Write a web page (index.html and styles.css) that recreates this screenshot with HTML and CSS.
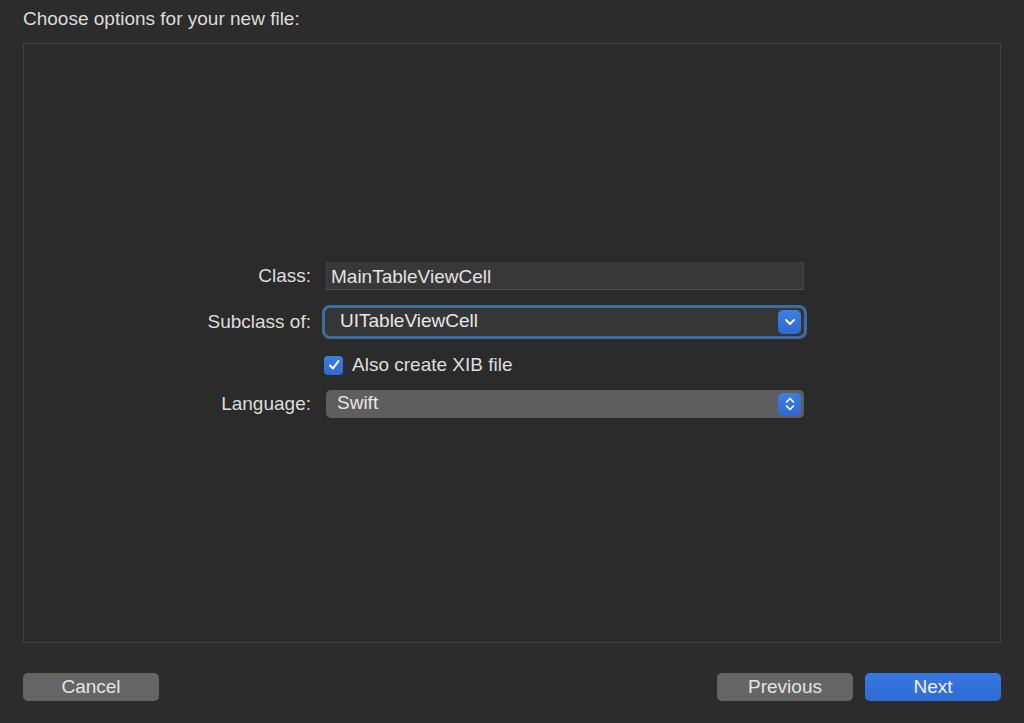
FILE: index.html
```html
<!DOCTYPE html>
<html>
<head>
<meta charset="utf-8">
<link rel="stylesheet" href="styles.css">
</head>
<body>
<div class="dialog">
  <div class="title">Choose options for your new file:</div>
  <div class="panel">
    <div class="form">
      <label class="lbl row1">Class:</label>
      <div class="field row1">MainTableViewCell</div>

      <label class="lbl row2">Subclass of:</label>
      <div class="focus row2">
        <div class="popup dark">
          <span class="ptext">UITableViewCell</span>
          <span class="pbtn">
            <svg width="12" height="8" viewBox="0 0 12 8"><path d="M2 2 L6 6 L10 2" fill="none" stroke="#fff" stroke-width="1.8" stroke-linecap="round" stroke-linejoin="round"/></svg>
          </span>
        </div>
      </div>

      <div class="row3 spacer"></div>
      <div class="check row3">
        <span class="box">
          <svg width="14" height="14" viewBox="0 0 14 14"><path d="M3 7.5 L6 10.5 L11.5 3" fill="none" stroke="#fff" stroke-width="2" stroke-linecap="round" stroke-linejoin="round"/></svg>
        </span>
        <span>Also create XIB file</span>
      </div>

      <label class="lbl row4">Language:</label>
      <div class="popup light row4">
        <span class="ptext">Swift</span>
        <span class="pbtn">
          <svg width="12" height="18" viewBox="0 0 12 18"><path d="M2.5 7 L6 3.5 L9.5 7 M2.5 11 L6 14.5 L9.5 11" fill="none" stroke="#fff" stroke-width="1.7" stroke-linecap="round" stroke-linejoin="round"/></svg>
        </span>
      </div>
    </div>
  </div>
  <div class="footer">
    <button class="btn gray">Cancel</button>
    <div class="right">
      <button class="btn gray">Previous</button>
      <button class="btn blue">Next</button>
    </div>
  </div>
</div>
</body>
</html>
```
FILE: styles.css
```css
html, body {
  margin: 0;
  padding: 0;
  background: #2c2c2c;
}
body {
  width: 1024px;
  height: 723px;
  overflow: hidden;
  font-family: "Liberation Sans", Arial, sans-serif;
  font-size: 19px;
  color: #dedede;
}
.dialog {
  display: flex;
  flex-direction: column;
  padding: 0 23px;
  height: 723px;
}
.title {
  height: 43px;
  line-height: 38px;
  color: #dcdcdc;
}
.panel {
  box-sizing: border-box;
  height: 600px;
  border: 1px solid #424242;
  background: #2b2b2b;
  padding-top: 218px;
}
.form {
  display: grid;
  grid-template-columns: 287px 478px;
  column-gap: 15px;
  align-items: center;
}
.lbl {
  text-align: right;
  color: #dcdcdc;
}
.row1 { grid-row: 1; }
.row2 { grid-row: 2; margin-top: 18px; }
.row3 { grid-row: 3; margin-top: 19px; }
.row4 { grid-row: 4; margin-top: 15px; }
.spacer { grid-column: 1; }
.field {
  box-sizing: border-box;
  height: 28px;
  line-height: 27px;
  padding-left: 4px;
  background: #383838;
  border: 1px solid #444;
  border-top-color: #3c3c3c;
  border-bottom-color: #4e4e4e;
  color: #e2e2e2;
}
.focus {
  margin-left: -4px;
  margin-right: -3px;
  padding: 3px;
  border-radius: 8px;
  background: #3e6e9e;
}
.focus.row2 { margin-top: 15px; margin-bottom: -3px; }
.popup {
  box-sizing: border-box;
  height: 28px;
  border-radius: 5px;
  display: flex;
  align-items: center;
  justify-content: space-between;
  padding: 0 3px 0 11px;
  color: #e6e6e6;
}
.popup.dark {
  background: #363636;
  padding-left: 15px;
}
.popup.light {
  background: #5e5e5e;
  padding-left: 11px;
}
.ptext { line-height: 26px; margin-top: -2px; }
.pbtn {
  width: 23px;
  height: 23px;
  border-radius: 5px;
  background: linear-gradient(#3e7de0, #2f69cf);
  display: flex;
  align-items: center;
  justify-content: center;
}
.popup.dark .pbtn { height: 24px; }
.check {
  grid-column: 2;
  display: flex;
  align-items: center;
  gap: 9px;
  height: 20px;
  margin-left: -2px;
}
.box {
  box-sizing: border-box;
  width: 19px;
  height: 19px;
  border-radius: 4px;
  background: linear-gradient(#3f7fe2, #2f68cf);
  display: flex;
  align-items: center;
  justify-content: center;
}
.footer {
  display: flex;
  justify-content: space-between;
  padding-top: 30px;
}
.right {
  display: flex;
  gap: 12px;
}
.btn {
  width: 136px;
  height: 28px;
  border: none;
  border-radius: 5px;
  font-family: "Liberation Sans", Arial, sans-serif;
  font-size: 19px;
  color: #e4e4e4;
  padding: 0;
}
.btn.gray { background: #656565; }
.btn.blue { background: linear-gradient(#3678e0, #2f6bd4); color: #f2f2f2; }
```
